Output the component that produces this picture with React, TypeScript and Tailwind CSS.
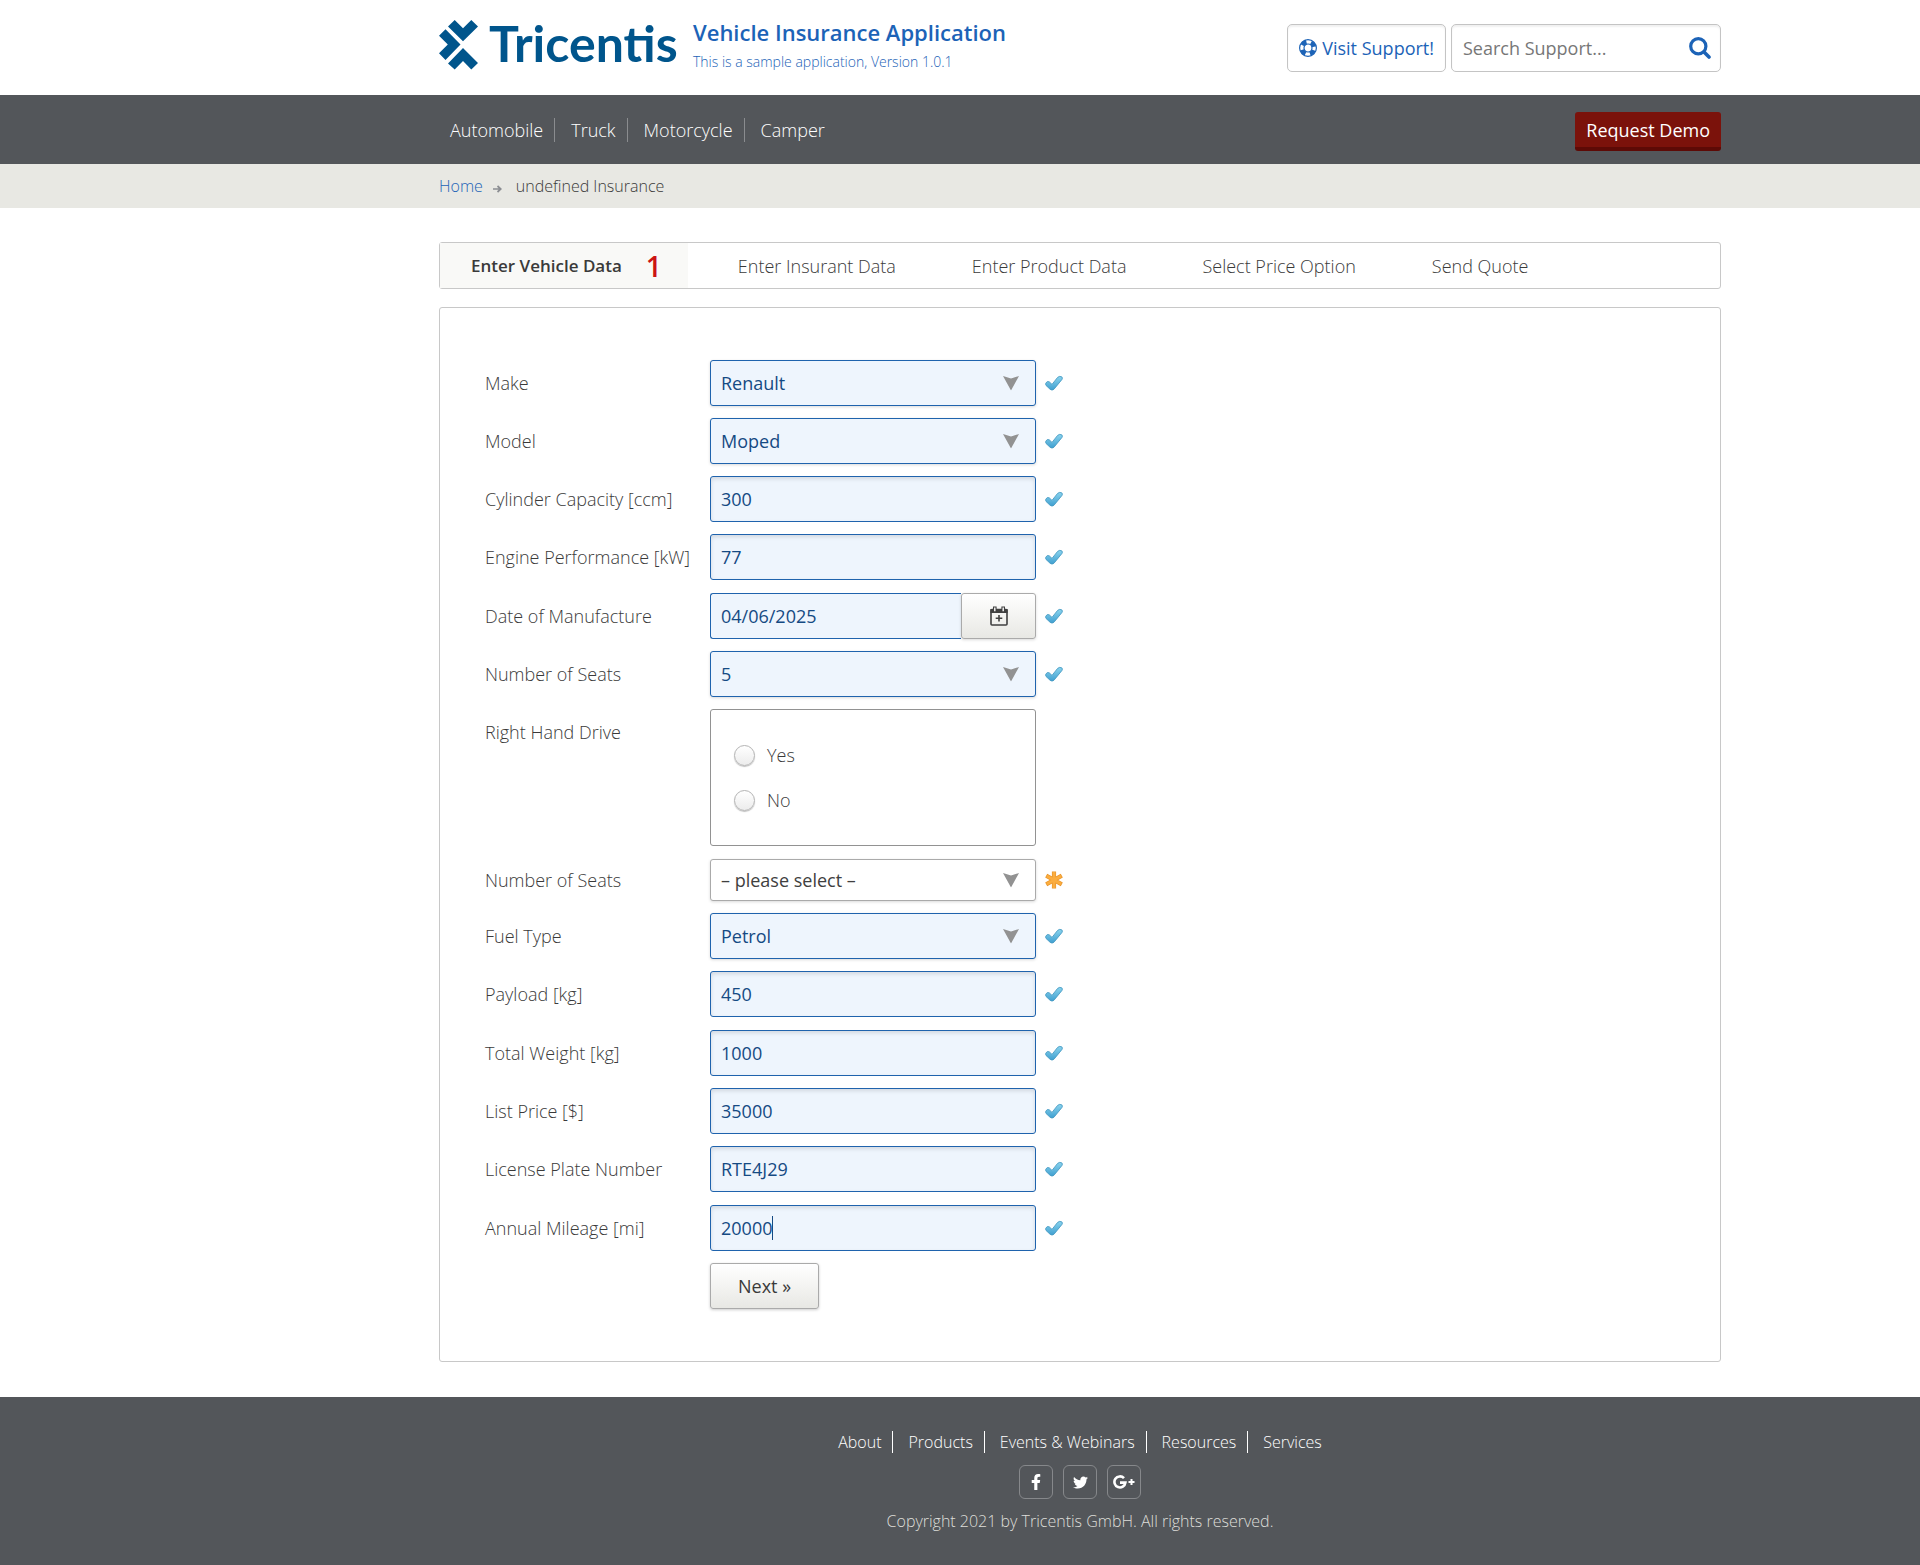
import React from "react";
import { FaFacebookF, FaTwitter } from "react-icons/fa";

function Tick() {
  return (
    <svg viewBox="0 0 18 17" className="h-[17px] w-[18px]" role="img" aria-label="valid">
      <defs>
        <linearGradient id="tick" x1="0" y1="0" x2="0" y2="1">
          <stop offset="0" stopColor="#8ad4ee" />
          <stop offset="1" stopColor="#3f9fd0" />
        </linearGradient>
      </defs>
      <path
        d="M0.8 8.2Q2 5.6 4.2 6.8L7 9.4L12.6 2.4Q14.6 0.6 16.9 1.9Q17.8 3 17 4.4L9 14.2Q7 16 5 14.2L1 10.4Q0.3 9.3 0.8 8.2Z"
        fill="url(#tick)"
        stroke="#4a9cc4"
        strokeWidth="0.9"
        strokeLinejoin="round"
      />
    </svg>
  );
}

function Required() {
  return (
    <svg viewBox="0 0 18 18" className="h-[18px] w-[18px]" role="img" aria-label="required">
      <g stroke="#e8952c" strokeWidth="4.2">
        <path d="M9 0.5V17.5M1.2 4.6L16.8 13.4M16.8 4.6L1.2 13.4" />
      </g>
      <g stroke="#fbad3f" strokeWidth="2.8">
        <path d="M9 1V17M1.8 5L16.2 13M16.2 5L1.8 13" />
      </g>
    </svg>
  );
}

function Row({
  id,
  label,
  status = "ok",
  children,
}: {
  id: string;
  label: string;
  status?: "ok" | "required";
  children: React.ReactNode;
}) {
  return (
    <div className="flex items-center">
      <label htmlFor={id} className="w-[225px] shrink-0 font-light">
        {label}
      </label>
      <div className="w-[326px]">{children}</div>
      <span className="ml-[9px]">{status === "ok" ? <Tick /> : <Required />}</span>
    </div>
  );
}

function SelectRow({ id, label, value, empty }: { id: string; label: string; value: string; empty?: boolean }) {
  return (
    <Row id={id} label={label} status={empty ? "required" : "ok"}>
      <div className="relative">
        <select
          id={id}
          defaultValue={value}
          className={
            "block w-full appearance-none rounded-[3px] border px-[10px] shadow-[0_1px_3px_rgba(0,0,0,0.15)] outline-none " +
            (empty
              ? "h-[42px] border-[#aaaaaa] bg-white text-[#404040]"
              : "h-[46px] border-[#1f63ad] bg-[#eef5fd] text-[#154a83]")
          }
        >
          <option>{value}</option>
        </select>
        <svg
          viewBox="0 0 16 15"
          className="pointer-events-none absolute top-1/2 right-[17px] h-[15px] w-[16px] -translate-y-1/2"
          aria-hidden="true"
        >
          <path d="M0 0.5L8 3L16 0.5L8 15Z" fill="#929292" />
        </svg>
      </div>
    </Row>
  );
}

function TextRow({ id, label, value, active }: { id: string; label: string; value: string; active?: boolean }) {
  return (
    <Row id={id} label={label}>
      <div className="relative">
        <input
          id={id}
          type="text"
          defaultValue={value}
          className="block h-[46px] w-full rounded-[3px] border border-[#1f63ad] bg-[#eef5fd] px-[10px] text-[#154a83] shadow-[inset_0_2px_4px_rgba(0,0,0,0.12)] outline-none"
        />
        {active && (
          <span className="pointer-events-none absolute top-[11px] left-[62px] h-[24px] w-px bg-[#154a83]" aria-hidden="true" />
        )}
      </div>
    </Row>
  );
}

const TABS = ["Enter Insurant Data", "Enter Product Data", "Select Price Option", "Send Quote"];
const NAV = ["Automobile", "Truck", "Motorcycle", "Camper"];
const FOOTER = ["About", "Products", "Events & Webinars", "Resources", "Services"];

const FRAME = "mx-auto w-full max-w-[1522px] lg:pl-[240px]";
const GROUP = "flex flex-col gap-[12px]";

export default function App() {
  return (
    <div className="min-h-screen bg-white font-['Open_Sans',sans-serif] text-[18px] leading-[24px] text-[#3a3a3a]">
      <header className={FRAME}>
        <div className="flex items-start pb-[22px]">
          <a href="#home" className="mt-[13px] flex w-[240px] items-center gap-[11px] text-[#00558c]">
            <svg viewBox="0 0 39 54" className="h-[54px] w-[39px]" fill="currentColor" aria-hidden="true">
              <path d="M9 10.5L15.7 4L24 12.3L32.3 4L39 10.5L24 25.2Z" />
              <path d="M9 47.5L15.7 53.5L24 45L32.3 53.5L39 47L24 32Z" />
              <path d="M0 19.7L6.5 13.2L21.5 28.5L6.5 44L0 37.3L8.8 28.5Z" />
            </svg>
            <span className="font-[Lato,sans-serif] text-[50px] leading-[60px] font-bold">Tricentis</span>
          </a>
          <div className="ml-[14px] flex-1 pt-[17px] text-[#1c63b7]">
            <h1 className="text-[22px] leading-[30px] font-semibold">Vehicle Insurance Application</h1>
            <p className="mt-[5px] text-[14px] leading-[20px] font-light">This is a sample application, Version 1.0.1</p>
          </div>
          <div className="mt-[24px] flex gap-[5px]">
            <a
              href="#support"
              className="flex h-[48px] items-center gap-[5px] rounded-[5px] border border-[#c4c4c4] px-[11px] text-[#1c63b7] shadow-[inset_0_2px_2px_rgba(0,0,0,0.06)]"
            >
              <svg viewBox="0 0 18 18" className="h-[18px] w-[18px]" fill="none" stroke="currentColor" aria-hidden="true">
                <circle cx="9" cy="9" r="8.4" strokeWidth="1.2" />
                <circle cx="9" cy="9" r="4" strokeWidth="1.2" />
                <circle cx="9" cy="9" r="6.2" strokeWidth="4.4" strokeDasharray="5 4.74" strokeDashoffset="-2.37" />
              </svg>
              Visit Support!
            </a>
            <form className="flex h-[48px] w-[270px] items-center rounded-[5px] border border-[#c4c4c4] pr-[9px] pl-[11px] shadow-[inset_0_2px_2px_rgba(0,0,0,0.06)]">
              <input
                type="text"
                aria-label="Search Support"
                placeholder="Search Support..."
                className="min-w-0 flex-1 outline-none placeholder:text-[#777777]"
              />
              <button type="button" aria-label="Search" className="text-[#1c63b7]">
                <svg viewBox="0 0 22 22" className="h-[22px] w-[22px]" fill="none" stroke="currentColor" aria-hidden="true">
                  <circle cx="9.3" cy="9.3" r="7.6" strokeWidth="3.2" />
                  <path d="M15 15L20 20" strokeWidth="3.6" strokeLinecap="round" />
                </svg>
              </button>
            </form>
          </div>
        </div>
      </header>

      <nav className="bg-[#53565a]">
        <div className={FRAME}>
          <div className="flex h-[69px] items-center justify-between">
            <ul className="flex font-light text-white">
              {NAV.map((item, i) => (
                <li key={item} className={i < NAV.length - 1 ? "mr-[5px] border-r border-[#8a8c8f] px-[11px]" : "px-[11px]"}>
                  <a href="#nav">{item}</a>
                </li>
              ))}
            </ul>
            <a
              href="#demo"
              className="mt-[3px] rounded-[3px] border-b-4 border-[#5d0a06] bg-[#7b120b] px-[11px] pt-[6px] pb-[5px] text-white"
            >
              Request Demo
            </a>
          </div>
        </div>
      </nav>

      <div className="bg-[#e8e8e3]">
        <div className={FRAME}>
          <div className="flex h-[44px] items-center text-[16px] leading-[20px] font-light">
            <a href="#home" className="text-[#1c63b7]">
              Home
            </a>
            <svg viewBox="0 0 9 8" className="mx-[10px] mt-[5px] h-[8px] w-[9px]" aria-hidden="true">
              <path d="M0 4H7M4.5 1L7.8 4L4.5 7" fill="none" stroke="#8b8d92" strokeWidth="1.7" />
            </svg>
            <span className="ml-[4px]">undefined Insurance</span>
          </div>
        </div>
      </div>

      <main className={FRAME}>
        <ol className="mt-[34px] flex h-[47px] rounded-[3px] border border-[#c8c8c8] font-light">
          <li className="mr-[12px] flex items-center bg-[#f9f9f7] pr-[26px] pl-[31px] font-semibold">
            <a href="#vehicle" className="text-[17px]">
              Enter Vehicle Data
            </a>
            <span className="ml-[24px] text-[28px] text-[#cc1414]">1</span>
          </li>
          {TABS.map((tab) => (
            <li key={tab} className="flex items-center px-[38px]">
              <a href="#step">{tab}</a>
            </li>
          ))}
        </ol>

        <form className="mt-[18px] flex flex-col gap-[13px] rounded-[3px] border border-[#c8c8c8] px-[45px] py-[52px]">
          <div className={GROUP}>
            <SelectRow id="make" label="Make" value="Renault" />
            <SelectRow id="model" label="Model" value="Moped" />
            <TextRow id="cylinder" label="Cylinder Capacity [ccm]" value="300" />
            <TextRow id="engine" label="Engine Performance [kW]" value="77" />
          </div>
          <div className={GROUP}>
            <Row id="date" label="Date of Manufacture">
              <div className="flex">
                <input
                  id="date"
                  type="text"
                  defaultValue="04/06/2025"
                  className="block h-[46px] min-w-0 flex-1 rounded-l-[3px] border border-r-0 border-[#1f63ad] bg-[#eef5fd] px-[10px] text-[#154a83] outline-none"
                />
                <button
                  type="button"
                  aria-label="Open calendar"
                  className="flex h-[46px] w-[75px] items-center justify-center rounded-[3px] border border-[#aaaaaa] bg-linear-to-b from-white to-[#e8e8e4] shadow-[0_1px_3px_rgba(0,0,0,0.15)]"
                >
                  <svg viewBox="0 0 18 20" className="h-[20px] w-[18px]" fill="none" stroke="#404040" aria-hidden="true">
                    <rect x="1" y="3.5" width="16" height="15.5" rx="1" strokeWidth="1.6" />
                    <path d="M0.4 5H17.6" strokeWidth="4" />
                    <path d="M4.8 0.5V5M13.2 0.5V5" strokeWidth="3.6" />
                    <path d="M4.8 1.4V5.2M13.2 1.4V5.2" stroke="#ffffff" strokeWidth="1.4" />
                    <path d="M9 9V15.6M5.7 12.3H12.3" strokeWidth="1.6" />
                  </svg>
                </button>
              </div>
            </Row>
            <SelectRow id="seats" label="Number of Seats" value="5" />
            <div className="flex items-start" role="radiogroup" aria-labelledby="rhd">
              <span id="rhd" className="w-[225px] shrink-0 pt-[11px] font-light">
                Right Hand Drive
              </span>
              <div className="flex w-[326px] flex-col gap-[21px] rounded-[3px] border border-[#929292] py-[33px] pl-[23px]">
                {["Yes", "No"].map((option) => (
                  <label key={option} className="flex items-center gap-[12px] font-light">
                    <input
                      type="radio"
                      name="righthanddrive"
                      className="h-[21px] w-[21px] appearance-none rounded-full border border-[#b4b4b4] bg-linear-to-b from-white to-[#ececec] shadow-[0_1px_1px_rgba(0,0,0,0.25)]"
                    />
                    {option}
                  </label>
                ))}
              </div>
            </div>
          </div>
          <div className={GROUP}>
            <SelectRow id="seatsmotor" label="Number of Seats" value="– please select –" empty />
            <SelectRow id="fuel" label="Fuel Type" value="Petrol" />
            <TextRow id="payload" label="Payload [kg]" value="450" />
          </div>
          <div className={GROUP}>
            <TextRow id="weight" label="Total Weight [kg]" value="1000" />
            <TextRow id="price" label="List Price [$]" value="35000" />
            <TextRow id="plate" label="License Plate Number" value="RTE4J29" />
          </div>
          <div className={GROUP}>
            <TextRow id="mileage" label="Annual Mileage [mi]" value="20000" active />
            <div className="pl-[225px]">
              <button
                type="button"
                className="block h-[46px] rounded-[3px] border border-[#aaaaaa] bg-linear-to-b from-white to-[#e8e8e4] px-[27px] shadow-[0_1px_3px_rgba(0,0,0,0.2)]"
              >
                Next »
              </button>
            </div>
          </div>
        </form>
      </main>

      <footer className="mt-[35px] bg-[#53565a] pt-[34px] pb-[33px]">
        <div className={FRAME}>
          <ul className="flex justify-center text-[16px] leading-[22px] font-light text-white">
            {FOOTER.map((item, i) => (
              <li key={item} className={i < FOOTER.length - 1 ? "mr-[4px] border-r border-white px-[11px]" : "px-[11px]"}>
                <a href="#footer">{item}</a>
              </li>
            ))}
          </ul>
          <div className="mt-[12px] flex justify-center gap-[10px] text-white">
            <a href="#facebook" aria-label="Facebook" className="flex size-[34px] items-center justify-center rounded-[6px] border border-[#86888b]">
              <FaFacebookF className="size-[16px]" />
            </a>
            <a href="#twitter" aria-label="Twitter" className="flex size-[34px] items-center justify-center rounded-[6px] border border-[#86888b]">
              <FaTwitter className="size-[15px]" />
            </a>
            <a href="#googleplus" aria-label="Google Plus" className="flex size-[34px] items-center justify-center rounded-[6px] border border-[#86888b]">
              <svg viewBox="0 0 22 14" className="h-[14px] w-[22px]" fill="none" stroke="currentColor" aria-hidden="true">
                <path d="M11 3.2A5.5 5.5 0 1 0 12.4 7.6H7" strokeWidth="2.6" />
                <path d="M18.5 4V10M15.5 7H21.5" strokeWidth="2" />
              </svg>
            </a>
          </div>
          <p className="mt-[11px] text-center text-[16px] leading-[22px] font-light text-[#deded9]">
            Copyright 2021 by Tricentis GmbH. All rights reserved.
          </p>
        </div>
      </footer>
    </div>
  );
}
